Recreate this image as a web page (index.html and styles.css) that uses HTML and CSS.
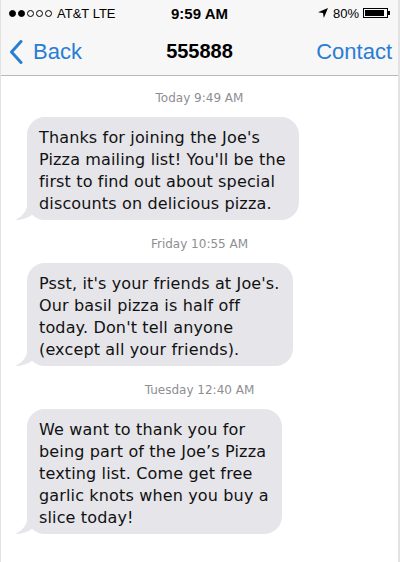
FILE: index.html
```html
<!DOCTYPE html>
<html>
<head>
<meta charset="utf-8">
<link rel="stylesheet" href="styles.css">
</head>
<body>
<div class="phone">
  <header class="header">
    <div class="status">
      <div class="status-left">
        <span class="dots">
          <span class="dot full"></span><span class="dot full"></span><span class="dot"></span><span class="dot"></span><span class="dot"></span>
        </span>
        <span class="carrier">AT&amp;T LTE</span>
      </div>
      <div class="clock">9:59 AM</div>
      <div class="status-right">
        <svg class="loc" width="10" height="10" viewBox="0 0 10 10"><path d="M10 0 L0 4.2 L5 5 L5.8 10 Z" fill="#000"/></svg>
        <span class="pct">80%</span>
        <span class="battery"><span class="battery-fill"></span></span><span class="battery-tip"></span>
      </div>
    </div>
    <nav class="nav">
      <div class="back">
        <svg class="chev" width="14" height="24" viewBox="0 0 14 24"><path d="M12 1.5 L2.5 12 L12 22.5" fill="none" stroke="#2a7dd3" stroke-width="3" stroke-linecap="round" stroke-linejoin="round"/></svg>
        <span>Back</span>
      </div>
      <div class="title">555888</div>
      <div class="contact">Contact</div>
    </nav>
  </header>
  <main class="thread">
    <div class="stamp">Today 9:49 AM</div>
    <div class="row">
      <div class="bubble">Thanks for joining the Joe's<br>Pizza mailing list! You'll be the<br>first to find out about special<br>discounts on delicious pizza.<svg class="tail" width="20" height="20" viewBox="0 0 20 20"><path d="M13 0 C13 9 9 16 0 20 C7 20 13 18 18 14 L20 0 Z" fill="#e5e5ea"/></svg></div>
    </div>
    <div class="stamp">Friday 10:55 AM</div>
    <div class="row">
      <div class="bubble">Psst, it's your friends at Joe's.<br>Our basil pizza is half off<br>today. Don't tell anyone<br>(except all your friends).<svg class="tail" width="20" height="20" viewBox="0 0 20 20"><path d="M13 0 C13 9 9 16 0 20 C7 20 13 18 18 14 L20 0 Z" fill="#e5e5ea"/></svg></div>
    </div>
    <div class="stamp">Tuesday 12:40 AM</div>
    <div class="row">
      <div class="bubble">We want to thank you for<br>being part of the Joe’s Pizza<br>texting list. Come get free<br>garlic knots when you buy a<br>slice today!<svg class="tail" width="20" height="20" viewBox="0 0 20 20"><path d="M13 0 C13 9 9 16 0 20 C7 20 13 18 18 14 L20 0 Z" fill="#e5e5ea"/></svg></div>
    </div>
  </main>
</div>
</body>
</html>
```
FILE: styles.css
```css
* { box-sizing: border-box; }
html, body { margin: 0; padding: 0; background: #fff; }
.phone {
  width: 400px;
  height: 562px;
  overflow: hidden;
  border-left: 1px solid #e2e2e2;
  border-right: 2px solid #e2e2e2;
  background: #fff;
}
.header {
  background: #f7f7f7;
  border-bottom: 1px solid #b9b9bd;
  height: 76px;
  font-family: "Liberation Sans", Arial, sans-serif;
}
.status {
  height: 24px;
  display: flex;
  align-items: center;
  justify-content: space-between;
  padding: 2px 8px 0 8px;
  position: relative;
  color: #000;
}
.status-left { display: flex; align-items: center; gap: 5px; }
.dots { display: flex; gap: 2px; }
.dot {
  width: 7px; height: 7px; border-radius: 50%;
  border: 1px solid #000;
}
.dot.full { background: #000; }
.carrier { font-size: 13px; }
.clock {
  position: absolute;
  left: 0; right: 0; top: 5px;
  text-align: center;
  font-size: 15px;
  font-weight: bold;
}
.status-right { display: flex; align-items: center; gap: 0; }
.loc { margin-right: 5px; }
.pct { font-size: 13px; margin-right: 4px; }
.battery {
  width: 25px; height: 10px;
  border: 1px solid #000;
  padding: 1px;
  display: flex;
}
.battery-fill { width: 90%; background: #000; }
.battery-tip { width: 2px; height: 4px; background: #000; }
.nav {
  height: 51px;
  display: flex;
  align-items: center;
  justify-content: space-between;
  padding: 5px 6px 0 8px;
  position: relative;
  color: #2a7dd3;
  font-size: 22px;
}
.back { display: flex; align-items: center; gap: 10px; }
.title {
  position: absolute;
  left: 0; right: 0; top: 16px;
  text-align: center;
  color: #000;
  font-weight: bold;
  font-size: 20px;
}
.thread {
  font-family: "DejaVu Sans", Verdana, sans-serif;
}
.stamp {
  text-align: center;
  color: #8e8e93;
  font-size: 12px;
  line-height: 16px;
  padding: 14px 0 11px;
}
.row { padding-left: 26px; margin-bottom: 2px; }
.bubble {
  position: relative;
  display: inline-block;
  background: #e5e5ea;
  border-radius: 18px;
  padding: 10px 13px 5px 12px;
  font-size: 16px;
  line-height: 22px;
  letter-spacing: 0.15px;
  color: #111;
  white-space: nowrap;
}
.tail {
  position: absolute;
  left: -12px;
  bottom: 0;
}
```
